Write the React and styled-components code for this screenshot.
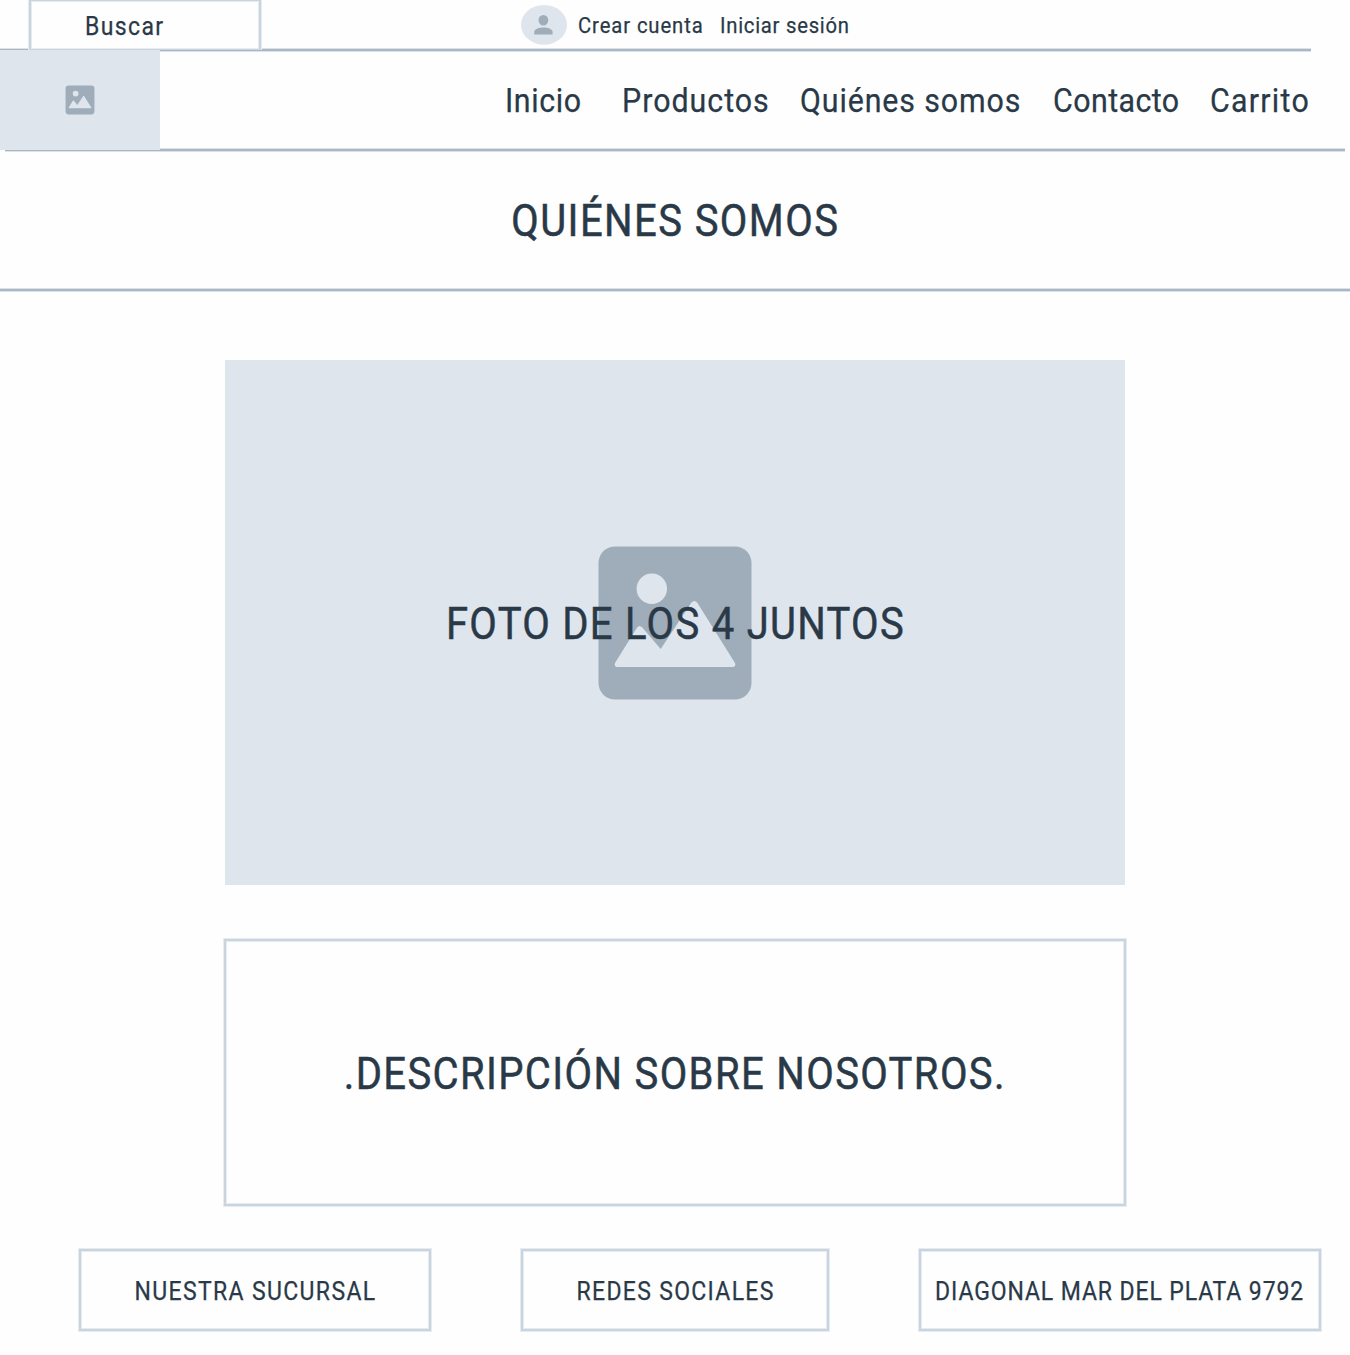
import React from "react";
import styled, { createGlobalStyle } from "styled-components";

const ink = "#293947";
const fill = "#dfe5ed";
const glyph = "#9eadb9";
const edge = "#c9d4de";
const edgeSoft = "#e6ecf1";

const GlobalStyle = createGlobalStyle`
  * { box-sizing: border-box; }
  body {
    margin: 0;
    background: #fefefe;
    color: ${ink};
    font-family: Roboto, "Open Sans", sans-serif;
  }
`;

const Page = styled.div`
  display: flex;
  flex-direction: column;
  width: 1350px;
  height: 1355px;
  overflow: hidden;
`;

/* Slightly condensed lettering with open tracking. */
const Label = styled.span`
  display: inline-block;
  white-space: nowrap;
  font-size: ${(p) => p.$size}px;
  letter-spacing: ${(p) => p.$track}px;
  margin-right: ${(p) => -p.$track}px;
  line-height: 1.2;
  -webkit-text-stroke: ${(p) => (p.$size > 40 ? 0.5 : 0.25)}px ${ink};
  transform: scaleX(0.92);
  transform-origin: ${(p) => (p.$start ? "left" : "center")} center;
`;

const Rule = styled.div`
  flex: none;
  height: 4px;
  margin-left: ${(p) => p.$left || 0}px;
  margin-right: ${(p) => p.$right || 0}px;
  background: #a9b6c3;
  border-top: 1px solid #dbe2e8;
  border-bottom: 1px solid #dbe2e8;
`;

const TopBar = styled.div`
  display: flex;
  align-items: flex-start;
  flex: none;
  height: 48px;
  padding-left: 29px;
`;

const Search = styled.div`
  position: relative;
  z-index: 1;
  display: flex;
  align-items: center;
  width: 232px;
  height: 50px;
  padding: 4px 0 0 54px;
  border: solid ${edge};
  border-width: 1px 2px;
  box-shadow: inset 0 0 0 1px ${edgeSoft}, 0 0 0 1px ${edgeSoft};
  clip-path: inset(0 -1px 0 -1px);
`;

const Account = styled.div`
  display: grid;
  grid-template-columns: 56.5px 142.5px auto;
  align-items: center;
  height: 52px;
  margin-left: 260px;
`;

const Avatar = styled.svg`
  display: block;
  width: 46px;
  height: 52px;
`;

const NavBar = styled.header`
  display: flex;
  flex: none;
  height: 96px;
`;

const Logo = styled.div`
  position: relative;
  z-index: 1;
  display: flex;
  align-items: center;
  justify-content: center;
  flex: none;
  width: 159.5px;
  height: 100px;
  margin-top: -2px;
  background: ${fill};
`;

const Nav = styled.nav`
  display: grid;
  grid-template-columns: 117px 178px 252.5px 157.5px 100px;
  align-items: center;
  margin-left: 345.5px;
  padding-top: 2px;
`;

const TitleBand = styled.section`
  display: flex;
  align-items: center;
  justify-content: center;
  flex: none;
  height: 136px;
  padding-top: 5px;
`;

const Main = styled.main`
  display: flex;
  flex-direction: column;
  align-items: center;
  flex: none;
  gap: 54px;
  padding-top: 68px;
`;

const Photo = styled.section`
  display: grid;
  place-items: center;
  width: 900px;
  height: 525px;
  background: ${fill};

  > * { grid-area: 1 / 1; }
`;

const Caption = styled.div`
  position: relative;
  padding-top: 5px;
`;

const Box = styled.div`
  display: flex;
  align-items: center;
  justify-content: center;
  flex: none;
  width: ${(p) => p.$width}px;
  height: ${(p) => p.$height}px;
  padding-top: ${(p) => p.$drop || 0}px;
  padding-right: 1px;
  border: 2px solid ${edge};
  box-shadow: inset 0 0 0 1px ${edgeSoft}, 0 0 0 1px ${edgeSoft};
`;

const Footer = styled.footer`
  display: flex;
  gap: 90px;
  padding: 43px 0 0 79px;
`;

const PictureSvg = styled.svg`
  display: block;
  width: ${(p) => p.$size}px;
  height: ${(p) => p.$size}px;
`;

function PictureIcon({ size, pad }) {
  const side = 153 + pad * 2;
  return (
    <PictureSvg $size={size} viewBox={`${-pad} ${-pad} ${side} ${side}`}>
      <rect width="153" height="153" rx="16.5" fill={glyph} />
      <circle cx="53.3" cy="42.3" r="15.2" fill={fill} />
      <path
        d="M19 120.5C16.3 120.5 15.5 118.3 16.8 116L38.6 81Q41 77.8 43.8 81L62.2 102.6L92.8 56.2Q95.8 52.6 98.8 56.2L136.2 116C137.6 118.3 136.7 120.5 134 120.5Z"
        fill={fill}
      />
    </PictureSvg>
  );
}

function UserIcon() {
  return (
    <Avatar viewBox="0 0 46 52">
      <ellipse cx="23" cy="24.8" rx="23" ry="19.9" fill={fill} />
      <ellipse cx="22.4" cy="20.3" rx="4.9" ry="5.3" fill={glyph} />
      <path d="M13.2 34.6V32C13.2 28.9 18.5 27.5 22.4 27.5S31.6 28.9 31.6 32V34.6Z" fill={glyph} />
    </Avatar>
  );
}

const links = [
  ["Inicio", 0.67],
  ["Productos", 1.08],
  ["Quiénes somos", 0.96],
  ["Contacto", 0.47],
  ["Carrito", 1.36],
];

const footer = [
  ["NUESTRA SUCURSAL", 352, 1.47],
  ["REDES SOCIALES", 308, 1.42],
  ["DIAGONAL MAR DEL PLATA 9792", 402, 0.97],
];

export default function App() {
  return (
    <Page>
      <GlobalStyle />
      <TopBar>
        <Search>
          <Label $size={25} $track={1.5} $start>Buscar</Label>
        </Search>
        <Account>
          <UserIcon />
          <Label $size={22} $track={0.98} $start>Crear cuenta</Label>
          <Label $size={22} $track={0.81} $start>Iniciar sesión</Label>
        </Account>
      </TopBar>
      <Rule $right={39} />
      <NavBar>
        <Logo>
          <PictureIcon size={30} pad={3} />
        </Logo>
        <Nav>
          {links.map(([text, track]) => (
            <Label key={text} $size={33} $track={track} $start>{text}</Label>
          ))}
        </Nav>
      </NavBar>
      <Rule $left={5} $right={5} />
      <TitleBand>
        <Label $size={43.5} $track={1.54}>QUIÉNES SOMOS</Label>
      </TitleBand>
      <Rule />
      <Main>
        <Photo>
          <PictureIcon size={154} pad={0.5} />
          <Caption>
            <Label $size={43.5} $track={1.39}>FOTO DE LOS 4 JUNTOS</Label>
          </Caption>
        </Photo>
        <Box $width={902} $height={267} $drop={5}>
          <Label $size={43.5} $track={1.48}>.DESCRIPCIÓN SOBRE NOSOTROS.</Label>
        </Box>
      </Main>
      <Footer>
        {footer.map(([text, width, track]) => (
          <Box key={text} $width={width} $height={82} $drop={3}>
            <Label $size={25} $track={track}>{text}</Label>
          </Box>
        ))}
      </Footer>
    </Page>
  );
}
